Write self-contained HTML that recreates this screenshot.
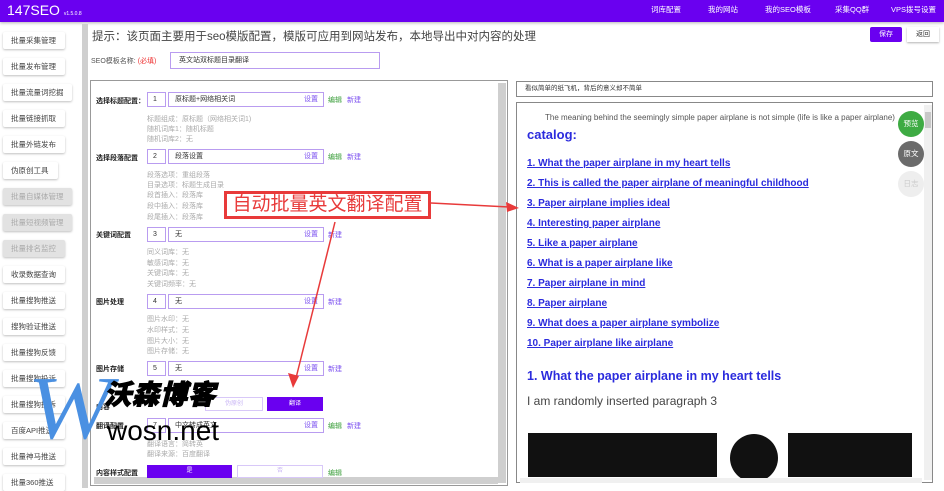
<!DOCTYPE html>
<html><head><meta charset="utf-8"><style>
*{margin:0;padding:0;box-sizing:border-box}
body{width:944px;height:488px;overflow:hidden;background:#fff;font-family:"Liberation Sans","Noto Sans CJK SC",sans-serif;position:relative;color:#333}
.a{position:absolute;white-space:nowrap}
.hd{left:0;top:0;width:944px;height:22px;background:#6a00f0;box-shadow:0 1px 3px rgba(0,0,0,.3)}
.nav{top:4px;color:#fff;font-size:7.5px}
.sb{left:3px;height:17px;background:#fff;box-shadow:0 1px 2px rgba(0,0,0,.25);font-size:7.5px;color:#444;padding-left:8px;line-height:17px;border-radius:2px}
.sb.d{background:#e2e2e2;color:#aaa}
.lab{font-size:7px;color:#222;font-weight:bold}
.num{width:19px;height:15px;border:1px solid #b99cf0;font-size:7px;padding-left:5px;line-height:13px}
.inp{width:156px;height:15px;border:1px solid #b99cf0;font-size:7px;padding-left:6px;line-height:13px}
.inp span{position:absolute;right:5px;color:#7b4ff0}
.g{color:#3a9e3a;font-size:7px}.p{color:#7b4ff0;font-size:7px}
.dt{font-size:7px;color:#aaa;left:147px}
.lk{left:527px;font-size:10px;font-weight:bold;color:#2b2bdd;text-decoration:underline}
.cir{width:26px;height:26px;border-radius:50%;color:#fff;font-size:7.5px;text-align:center;line-height:26px}
</style></head><body>
<div class="a hd"></div>
<div class="a" style="left:7px;top:2px;color:#fff;font-size:14px">147SEO <span style="font-size:5px">v1.5.0.8</span></div>
<div class="a nav" style="left:651px">词库配置</div>
<div class="a nav" style="left:708px">我的网站</div>
<div class="a nav" style="left:765px">我的SEO模板</div>
<div class="a nav" style="left:835px">采集QQ群</div>
<div class="a nav" style="left:891px">VPS拨号设置</div>

<div class="a sb" style="top:32px;width:62px">批量采集管理</div>
<div class="a sb" style="top:58px;width:62px">批量发布管理</div>
<div class="a sb" style="top:84px;width:69px">批量流量词挖掘</div>
<div class="a sb" style="top:110px;width:62px">批量链接抓取</div>
<div class="a sb" style="top:136px;width:62px">批量外链发布</div>
<div class="a sb" style="top:162px;width:55px">伪原创工具</div>
<div class="a sb d" style="top:188px;width:69px">批量自媒体管理</div>
<div class="a sb d" style="top:214px;width:69px">批量短视频管理</div>
<div class="a sb d" style="top:240px;width:62px">批量排名监控</div>
<div class="a sb" style="top:266px;width:62px">收录数据查询</div>
<div class="a sb" style="top:292px;width:62px">批量搜狗推送</div>
<div class="a sb" style="top:318px;width:62px">搜狗验证推送</div>
<div class="a sb" style="top:344px;width:62px">批量搜狗反馈</div>
<div class="a sb" style="top:370px;width:62px">批量搜狗投诉</div>
<div class="a sb" style="top:396px;width:62px">批量搜狗投诉</div>
<div class="a sb" style="top:422px;width:62px">百度API推送</div>
<div class="a sb" style="top:448px;width:62px">批量神马推送</div>
<div class="a sb" style="top:474px;width:62px">批量360推送</div>
<div class="a" style="left:82px;top:24px;width:6px;height:464px;background:#cfcfcf"></div>

<div class="a" style="left:92px;top:28px;font-size:11.5px;color:#444">提示：该页面主要用于seo模版配置，模版可应用到网站发布，本地导出中对内容的处理</div>
<div class="a" style="left:870px;top:27px;width:32px;height:15px;background:#6a00f0;color:#fff;font-size:7px;text-align:center;line-height:15px;border-radius:2px">保存</div>
<div class="a" style="left:907px;top:27px;width:32px;height:15px;background:#fff;box-shadow:0 1px 2px rgba(0,0,0,.3);font-size:7px;text-align:center;line-height:15px">返回</div>
<div class="a" style="left:91px;top:56px;font-size:7px;color:#555">SEO模板名称: <span style="color:#e33">(必填)</span></div>
<div class="a" style="left:170px;top:52px;width:210px;height:17px;border:1px solid #b99cf0;font-size:7px;padding-left:8px;line-height:15px">英文站双标题目录翻译</div>

<div class="a" style="left:90px;top:80px;width:418px;height:406px;border:1px solid #999"></div>
<div class="a" style="left:498px;top:83px;width:8px;height:400px;background:#cfcfcf"></div>
<div class="a" style="left:94px;top:477px;width:404px;height:7px;background:#cfcfcf"></div>

<div class="a lab" style="left:96px;top:96px">选择标题配置：</div>
<div class="a num" style="left:147px;top:92px">1</div>
<div class="a inp" style="left:168px;top:92px">原标题+网络相关词<span>设置</span></div>
<div class="a g" style="left:328px;top:95px">编辑</div><div class="a p" style="left:347px;top:95px">新建</div>
<div class="a dt" style="top:114px">标题组成：原标题（网络相关词1)</div>
<div class="a dt" style="top:124px">随机词库1：随机标题</div>
<div class="a dt" style="top:134px">随机词库2：无</div>

<div class="a lab" style="left:96px;top:153px">选择段落配置</div>
<div class="a num" style="left:147px;top:149px">2</div>
<div class="a inp" style="left:168px;top:149px">段落设置<span>设置</span></div>
<div class="a g" style="left:328px;top:152px">编辑</div><div class="a p" style="left:347px;top:152px">新建</div>
<div class="a dt" style="top:170px">段落选项：重组段落</div>
<div class="a dt" style="top:180px">目录选项：标题生成目录</div>
<div class="a dt" style="top:190px">段首插入：段落库</div>
<div class="a dt" style="top:201px">段中插入：段落库</div>
<div class="a dt" style="top:212px">段尾插入：段落库</div>

<div class="a lab" style="left:96px;top:230px">关键词配置</div>
<div class="a num" style="left:147px;top:227px">3</div>
<div class="a inp" style="left:168px;top:227px">无<span>设置</span></div>
<div class="a p" style="left:328px;top:230px">新建</div>
<div class="a dt" style="top:247px">同义词库：无</div>
<div class="a dt" style="top:258px">敏感词库：无</div>
<div class="a dt" style="top:268px">关键词库：无</div>
<div class="a dt" style="top:279px">关键词频率：无</div>

<div class="a lab" style="left:96px;top:297px">图片处理</div>
<div class="a num" style="left:147px;top:294px">4</div>
<div class="a inp" style="left:168px;top:294px">无<span>设置</span></div>
<div class="a p" style="left:328px;top:297px">新建</div>
<div class="a dt" style="top:314px">图片水印：无</div>
<div class="a dt" style="top:325px">水印样式：无</div>
<div class="a dt" style="top:336px">图片大小：无</div>
<div class="a dt" style="top:346px">图片存储：无</div>

<div class="a lab" style="left:96px;top:364px">图片存储</div>
<div class="a num" style="left:147px;top:361px">5</div>
<div class="a inp" style="left:168px;top:361px">无<span>设置</span></div>
<div class="a p" style="left:328px;top:364px">新建</div>

<div class="a lab" style="left:96px;top:402px">内容</div>
<div class="a" style="left:205px;top:397px;width:58px;height:14px;border:1px solid #d8c8f8;font-size:6px;color:#c9b5f5;text-align:center;line-height:12px">伪原创</div>
<div class="a" style="left:267px;top:397px;width:56px;height:14px;background:#6a00f0;font-size:6px;color:#fff;text-align:center;line-height:14px">翻译</div>

<div class="a lab" style="left:96px;top:421px">翻译配置</div>
<div class="a num" style="left:147px;top:418px">7</div>
<div class="a inp" style="left:168px;top:418px">中文转成英文<span>设置</span></div>
<div class="a g" style="left:328px;top:421px">编辑</div><div class="a p" style="left:347px;top:421px">新建</div>
<div class="a dt" style="top:439px">翻译语言：简转英</div>
<div class="a dt" style="top:449px">翻译来源：百度翻译</div>
<div class="a lab" style="left:96px;top:468px">内容样式配置</div>
<div class="a" style="left:147px;top:465px;width:85px;height:13px;background:#6a00f0;color:#fff;font-size:6px;text-align:center;line-height:13px">是</div>
<div class="a" style="left:237px;top:465px;width:86px;height:13px;border:1px solid #d8c8f8;color:#c9b5f5;font-size:6px;text-align:center;line-height:11px">否</div>
<div class="a g" style="left:328px;top:468px">编辑</div>

<!-- right -->
<div class="a" style="left:516px;top:81px;width:417px;height:16px;border:1px solid #888;font-size:6.5px;padding-left:8px;line-height:14px;color:#333">看似简单的纸飞机，背后的意义却不简单</div>
<div class="a" style="left:516px;top:102px;width:417px;height:381px;border:1px solid #888"></div>
<div class="a" style="left:924px;top:105px;width:8px;height:375px;background:#f0f0f0"></div>
<div class="a" style="left:925px;top:112px;width:6px;height:16px;background:#c8c8c8"></div>
<div class="a" style="left:545px;top:113px;font-size:8px;color:#555">The meaning behind the seemingly simple paper airplane is not simple (life is like a paper airplane)</div>
<div class="a" style="left:527px;top:127px;font-size:13px;font-weight:bold;color:#2b2bdd">catalog:</div>
<div class="a lk" style="top:158px">1. What the paper airplane in my heart tells</div>
<div class="a lk" style="top:178px">2. This is called the paper airplane of meaningful childhood</div>
<div class="a lk" style="top:198px">3. Paper airplane implies ideal</div>
<div class="a lk" style="top:218px">4. Interesting paper airplane</div>
<div class="a lk" style="top:238px">5. Like a paper airplane</div>
<div class="a lk" style="top:258px">6. What is a paper airplane like</div>
<div class="a lk" style="top:278px">7. Paper airplane in mind</div>
<div class="a lk" style="top:298px">8. Paper airplane</div>
<div class="a lk" style="top:318px">9. What does a paper airplane symbolize</div>
<div class="a lk" style="top:338px">10. Paper airplane like airplane</div>
<div class="a" style="left:527px;top:369px;font-size:12.5px;font-weight:bold;color:#2b2bdd">1. What the paper airplane in my heart tells</div>
<div class="a" style="left:527px;top:394px;font-size:12px;color:#444">I am randomly inserted paragraph 3</div>
<div class="a" style="left:528px;top:433px;width:189px;height:44px;background:#111"></div>
<div class="a" style="left:730px;top:434px;width:48px;height:48px;border-radius:50%;background:#111"></div>
<div class="a" style="left:788px;top:433px;width:124px;height:44px;background:#111"></div>
<div class="a" style="left:520px;top:478px;width:402px;height:5px;background:#f0f0f0"></div>
<div class="a cir" style="left:898px;top:111px;background:#3eab43">预览</div>
<div class="a cir" style="left:898px;top:141px;background:#6b6b6b">原文</div>
<div class="a cir" style="left:898px;top:171px;background:#eee;color:#ccc">日志</div>

<!-- annotation -->
<div class="a" style="left:224px;top:191px;width:207px;height:28px;border:3px solid #e83a3a;background:#fff;color:#e83a3a;font-size:19px;line-height:22px;text-align:center">自动批量英文翻译配置</div>
<svg class="a" style="left:0;top:0" width="944" height="488">
<line x1="431" y1="203" x2="510" y2="207" stroke="#e83a3a" stroke-width="1.5"/>
<polygon points="519,208 506,202 507,212" fill="#e83a3a"/>
<line x1="335" y1="222" x2="296" y2="378" stroke="#e83a3a" stroke-width="1.5"/>
<polygon points="293,388 288,373 299,376" fill="#e83a3a"/>
</svg>
<!-- watermark -->
<div class="a" style="left:30px;top:364px;font-family:'Liberation Serif',serif;font-size:90px;color:#4a90e2;line-height:90px;transform:skewX(-8deg)">W</div>
<div class="a" style="left:104px;top:380px;font-size:27px;font-weight:900;font-style:italic;color:#000;letter-spacing:1px;line-height:30px;-webkit-text-stroke:1px #000">沃森博客</div>
<div class="a" style="left:107px;top:416px;font-size:28px;color:#000;line-height:30px">wosn.net</div>
</body></html>
